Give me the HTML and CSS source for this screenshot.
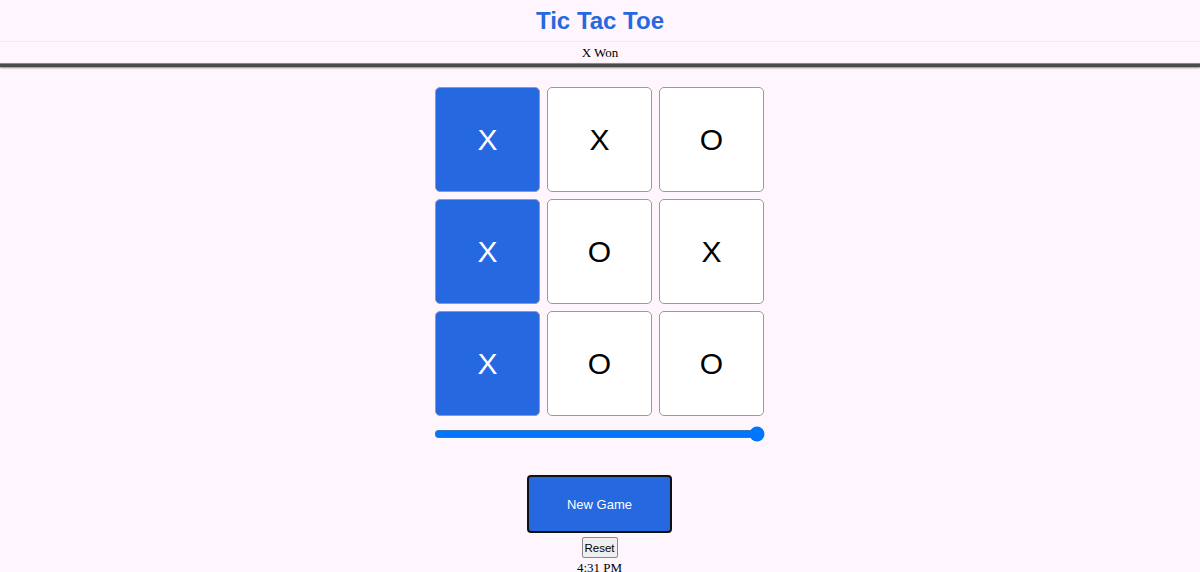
FILE: index.html
```html
<!DOCTYPE html>
<html>
<head>
<meta charset="utf-8">
<link rel="stylesheet" href="styles.css">
</head>
<body>
<header class="top">
  <h1 class="title">Tic Tac Toe</h1>
  <div class="status">X Won</div>
  <div class="rule"></div>
</header>
<main class="game">
  <div class="board">
    <div class="cell win">X</div>
    <div class="cell">X</div>
    <div class="cell">O</div>
    <div class="cell win">X</div>
    <div class="cell">O</div>
    <div class="cell">X</div>
    <div class="cell win">X</div>
    <div class="cell">O</div>
    <div class="cell">O</div>
  </div>
  <input class="history" type="range" min="0" max="8" value="8">
  <button class="new-game">New Game</button>
  <button class="reset">Reset</button>
  <div class="clock">4:31 PM</div>
</main>
</body>
</html>
```
FILE: styles.css
```css
html, body {
  margin: 0;
  padding: 0;
  background: #fff5fd;
  font-family: "Liberation Serif", serif;
  overflow: hidden;
}
.top {
  display: flex;
  flex-direction: column;
  align-items: stretch;
}
.title {
  margin: 0;
  height: 41px;
  line-height: 41px;
  text-align: center;
  font-family: "Liberation Sans", Arial, sans-serif;
  font-size: 24px;
  font-weight: bold;
  color: #2568e0;
  border-bottom: 1px solid #f1e8ef;
}
.status {
  height: 21px;
  line-height: 21px;
  text-align: center;
  font-size: 13px;
  color: #000;
}
.rule {
  height: 3px;
  background: #4a4a4a;
  box-shadow: 0 1px 2px rgba(0, 0, 0, 0.45);
  border-top: 1px solid #8a8a8a;
}
.game {
  display: flex;
  flex-direction: column;
  align-items: center;
  padding-top: 20px;
  padding-right: 1px;
}
.board {
  display: grid;
  grid-template-columns: repeat(3, 105px);
  grid-template-rows: repeat(3, 105px);
  column-gap: 7px;
  row-gap: 7px;
}
.cell {
  box-sizing: border-box;
  border: 1px solid #9a9a9a;
  border-radius: 5px;
  background: #fff;
  display: flex;
  align-items: center;
  justify-content: center;
  font-family: "Liberation Sans", Arial, sans-serif;
  font-size: 30px;
  color: #000;
}
.cell.win {
  background: #2568e0;
  color: #fff;
}
.history {
  width: 331px;
  margin: 10px 0 0 0;
  height: 16px;
  accent-color: #0075ff;
}
.new-game {
  margin-top: 33px;
  width: 145px;
  height: 58px;
  box-sizing: border-box;
  background: #2568e0;
  color: #fff;
  border: 2px solid #111;
  border-radius: 4px;
  font-family: "Liberation Sans", Arial, sans-serif;
  font-size: 13px;
}
.reset {
  margin-top: 4px;
  font-family: "Liberation Sans", Arial, sans-serif;
  font-size: 11.5px;
  padding: 1px 2px;
  height: 21px;
  width: 36px;
  box-sizing: border-box;
  background: #efefef;
  border: 1px solid #888;
  border-radius: 2px;
  color: #000;
}
.clock {
  margin-top: 1px;
  font-size: 13px;
  line-height: 18px;
}
```
